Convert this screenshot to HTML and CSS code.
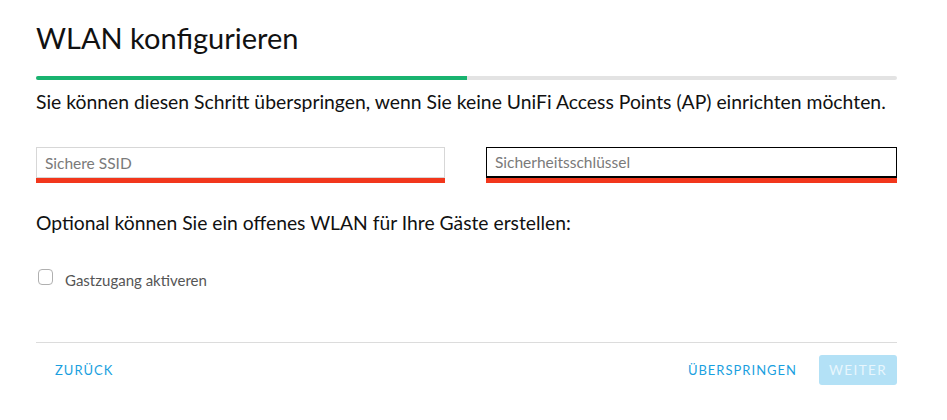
FILE: index.html
```html
<!DOCTYPE html>
<html lang="de">
<head>
<meta charset="utf-8">
<link rel="stylesheet" href="styles.css">
</head>
<body>
<div class="wizard">
  <h1 class="title">WLAN konfigurieren</h1>
  <div class="progress"><div class="progress-fill" style="width:50%"></div></div>
  <p class="lead">Sie können diesen Schritt überspringen, wenn Sie keine UniFi Access Points (AP) einrichten möchten.</p>
  <div class="fields">
    <div class="field"><input class="input" type="text" placeholder="Sichere SSID"></div>
    <div class="field"><input class="input focused" type="text" placeholder="Sicherheitsschlüssel"></div>
  </div>
  <p class="optional">Optional können Sie ein offenes WLAN für Ihre Gäste erstellen:</p>
  <label class="check"><span class="box"></span><span class="check-label">Gastzugang aktiveren</span></label>
  <div class="footer">
    <button class="link-btn back">ZURÜCK</button>
    <div class="right">
      <button class="link-btn">ÜBERSPRINGEN</button>
      <button class="primary-btn">WEITER</button>
    </div>
  </div>
</div>
</body>
</html>
```

FILE: styles.css
```css
* { box-sizing: border-box; }
body {
  margin: 0;
  background: #fff;
  font-family: Lato, "Open Sans", sans-serif;
  color: #111;
}
.wizard {
  width: 861px;
  margin-left: 36px;
  padding-top: 18px;
}
.title {
  margin: 0;
  font-size: 29px;
  font-weight: 400;
  line-height: 40px;
  color: #111;
}
.progress {
  margin-top: 18px;
  height: 4px;
  background: #e3e3e3;
  border-radius: 2px;
  overflow: hidden;
}
.progress-fill {
  height: 4px;
  background: #19b36f;
}
.lead {
  margin: 9px 0 0;
  font-size: 19.35px;
  line-height: 26px;
}
.fields {
  display: grid;
  grid-template-columns: 409px 411px;
  column-gap: 41px;
  margin-top: 32px;
}
.field {
  border-bottom: 5px solid #f2371c;
}
.input {
  display: block;
  width: 100%;
  height: 31px;
  border: 1px solid #d7d7d7;
  padding: 0 8px;
  font-family: Lato, sans-serif;
  font-size: 15.5px;
  color: #333;
  outline: none;
  background: #fff;
}
.input.focused {
  border: 1px solid #000;
  border-bottom-width: 2px;
}
.input::placeholder { color: #7a7a7a; }
.optional {
  margin: 27px 0 0;
  font-size: 19.3px;
  line-height: 26px;
}
.check {
  display: flex;
  align-items: flex-start;
  margin-top: 33px;
  margin-left: 2px;
}
.box {
  width: 15px;
  height: 16px;
  border: 1px solid #b0b0b0;
  border-radius: 4px;
  background: #fff;
}
.check-label {
  margin-left: 12px;
  font-size: 15px;
  line-height: 18px;
  color: #555;
  margin-top: 2px;
}
.footer {
  margin-top: 53px;
  border-top: 1px solid #dcdcdc;
  padding-top: 12px;
  display: flex;
  justify-content: space-between;
  align-items: center;
}
.right {
  display: flex;
  align-items: center;
  gap: 22px;
}
.link-btn {
  border: 0;
  background: none;
  font-family: Lato, sans-serif;
  font-size: 13px;
  letter-spacing: 1px;
  color: #1a9fe0;
  padding: 0;
  cursor: pointer;
}
.back { margin-left: 19px; }
.primary-btn {
  width: 78px;
  height: 30px;
  border: 0;
  border-radius: 3px;
  background: #b3e1f6;
  color: #e8f6fd;
  font-family: Lato, sans-serif;
  font-size: 13.5px;
  letter-spacing: 1.4px;
  padding: 0;
}
```
